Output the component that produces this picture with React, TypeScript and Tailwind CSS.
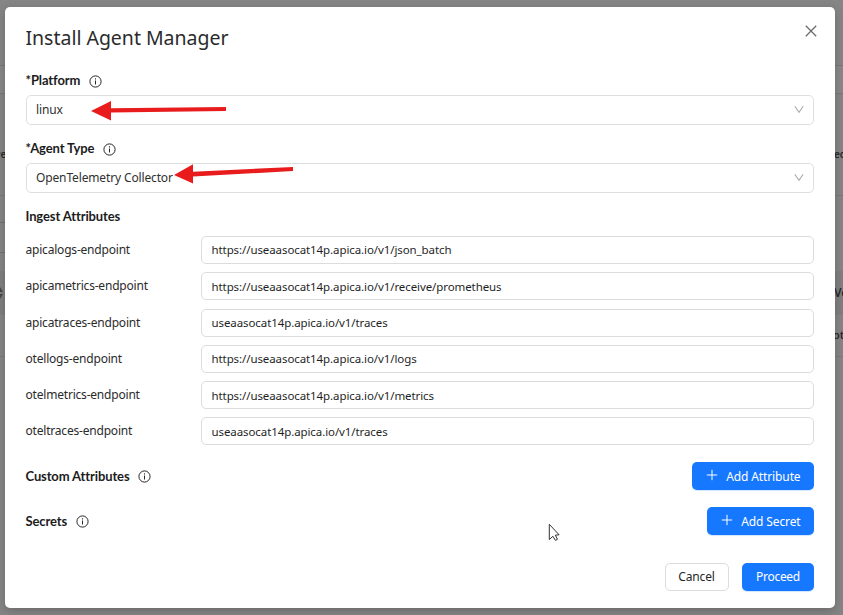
import React from "react";

const endpoints = [
  ["apicalogs-endpoint", "https://useaasocat14p.apica.io/v1/json_batch"],
  ["apicametrics-endpoint", "https://useaasocat14p.apica.io/v1/receive/prometheus"],
  ["apicatraces-endpoint", "useaasocat14p.apica.io/v1/traces"],
  ["otellogs-endpoint", "https://useaasocat14p.apica.io/v1/logs"],
  ["otelmetrics-endpoint", "https://useaasocat14p.apica.io/v1/metrics"],
  ["oteltraces-endpoint", "useaasocat14p.apica.io/v1/traces"],
];

function InfoIcon() {
  return (
    <svg className="size-[13px] shrink-0" viewBox="0 0 13 13" fill="none" stroke="#262626">
      <circle cx="6.5" cy="6.5" r="5.6" strokeWidth="1" />
      <path d="M6.5 5.5v4" strokeWidth="1" />
      <path d="M6.5 3.3v1.2" strokeWidth="1.1" />
    </svg>
  );
}

function Heading({ children, info = true }: { children: string; info?: boolean }) {
  return (
    <div className="flex h-5 items-center gap-[8.5px] font-['Lato',sans-serif] text-[13px] font-bold tracking-[-0.12px] text-[#1c1c1c]">
      <span>{children}</span>
      {info && <InfoIcon />}
    </div>
  );
}

function Select({ value }: { value: string }) {
  return (
    <div className="flex h-[30px] w-full items-center justify-between rounded-[5px] border border-[#dcdfe0] pr-[9px] pl-[9.5px] text-[12px] tracking-[-0.14px] text-[#303030]">
      <span className="-mt-px">{value}</span>
      <svg className="-mt-px h-[9px] w-[10px]" viewBox="0 0 10 9" fill="none" stroke="#a9a9a9" strokeWidth="1.1">
        <path d="M.8 1.3 5 7.2l4.2-5.9" />
      </svg>
    </div>
  );
}

function AddButton({ label }: { label: string }) {
  return (
    <button className="flex h-7 items-center gap-2 rounded-[5px] bg-[#1677ff] pr-[13.5px] pl-3.5 text-[12px] tracking-[-0.12px] text-white shadow-[0_1px_1px_#cfe6ff]">
      <svg className="-mt-0.5 size-3" viewBox="0 0 12 12" stroke="currentColor" strokeWidth="1">
        <path d="M6 .8v10.4M.8 6h10.4" />
      </svg>
      <span className="pt-0.5">{label}</span>
    </button>
  );
}

function Backdrop() {
  return (
    <div className="absolute inset-0 overflow-hidden bg-[#858585] text-[11px] font-semibold text-[#2a2a2a]">
      <div className="absolute inset-x-0 top-[65px] h-[29px] border-y border-[#777] bg-[#888]" />
      <div className="absolute inset-x-0 top-[195px] h-px bg-[#787878]" />
      <div className="absolute top-[222px] left-0 h-px w-5 bg-[#707070]" />
      <div className="absolute top-[252px] left-0 h-px w-5 bg-[#707070]" />
      <div className="absolute inset-x-0 top-[271px] h-[44px] bg-[#7f7f7f]" />
      <div className="absolute inset-x-0 top-[356px] h-px bg-[#7b7b7b]" />
      <span className="absolute top-[147px] -left-[5px] text-[10px]">ve</span>
      <span className="absolute top-[147px] left-[834px] text-[10px]">ed</span>
      <span className="absolute top-[284px] left-[834px] text-[12px]">Ve</span>
      <span className="absolute top-[327px] left-[833px]">ot</span>
      <svg className="absolute top-[287px] left-0 h-3 w-1" viewBox="0 0 4 12" fill="#484848">
        <path d="M0 0 3 5H0zM0 7h3l-3 5z" />
      </svg>
    </div>
  );
}

export default function App() {
  return (
    <div className="relative h-[615px] w-[843px] overflow-hidden font-['Noto_Sans',sans-serif]">
      <Backdrop />
      <div className="relative mt-[7px] ml-[5px] flex h-[601px] w-[830px] flex-col rounded-[5px] bg-white pr-[21px] pl-[20.5px] shadow-[0_3px_10px_#0003]">
        <div className="flex h-[64px] items-start justify-between pt-[17px]">
          <h1 className="text-[19.5px] leading-7 tracking-[-0.02px] text-[#2b2b2b]">Install Agent Manager</h1>
          <svg className="mt-[1px] -mr-[2.5px] size-[12px]" viewBox="0 0 12 12" stroke="#6a6a6a" strokeWidth="1.25">
            <path d="m.8.8 10.4 10.4M11.2.8.8 11.2" />
          </svg>
        </div>

        <Heading>*Platform</Heading>
        <div className="mt-1"><Select value="linux" /></div>
        <div className="mt-3.5"><Heading>*Agent Type</Heading></div>
        <div className="mt-1"><Select value="OpenTelemetry Collector" /></div>
        <div className="mt-3.5"><Heading info={false}>Ingest Attributes</Heading></div>

        <div className="mt-[9px] flex flex-col gap-[8.3px]">
          {endpoints.map(([name, url]) => (
            <div key={name} className="flex h-7 items-center">
              <label className="w-[175.5px] text-[12px] tracking-[-0.2px] text-[#2b2b2b]">{name}</label>
              <div className="flex h-7 flex-1 items-center rounded-[5px] border border-[#dcdcdc] pl-[9.5px] text-[11.5px] tracking-[-0.09px] text-[#1f1f1f]">
                {url}
              </div>
            </div>
          ))}
        </div>

        <div className="mt-[17px] flex h-7 items-center justify-between">
          <Heading>Custom Attributes</Heading>
          <AddButton label="Add Attribute" />
        </div>
        <div className="mt-[17px] flex h-7 items-center justify-between">
          <Heading>Secrets</Heading>
          <AddButton label="Add Secret" />
        </div>

        <div className="mt-[28px] flex justify-end gap-[13.5px] text-[12px]">
          <button className="h-7 w-16 rounded-[5px] border border-[#dcdcdc] tracking-[-0.15px] text-[#262626]">Cancel</button>
          <button className="h-7 w-[72px] rounded-[5px] bg-[#1677ff] tracking-[-0.3px] text-white shadow-[0_1px_1px_#cfe6ff]">Proceed</button>
        </div>
      </div>

      <svg className="pointer-events-none absolute inset-0 size-full" viewBox="0 0 843 615" fill="#e81c1c">
        <path d="M91 111 111 101v7.3L226 107v4.1l-115 1.4v8z" />
        <path d="M174 175 193 164.3v7.4L293 167v4.1l-100 5.3v7.2z" />
        <path d="M549.3 524.3v15.2l3.6-3.2 2.5 4.1 2.1-1.1-2.2-4.1 3.8-.4z" fill="white" stroke="#333" strokeWidth="1" />
      </svg>
    </div>
  );
}
